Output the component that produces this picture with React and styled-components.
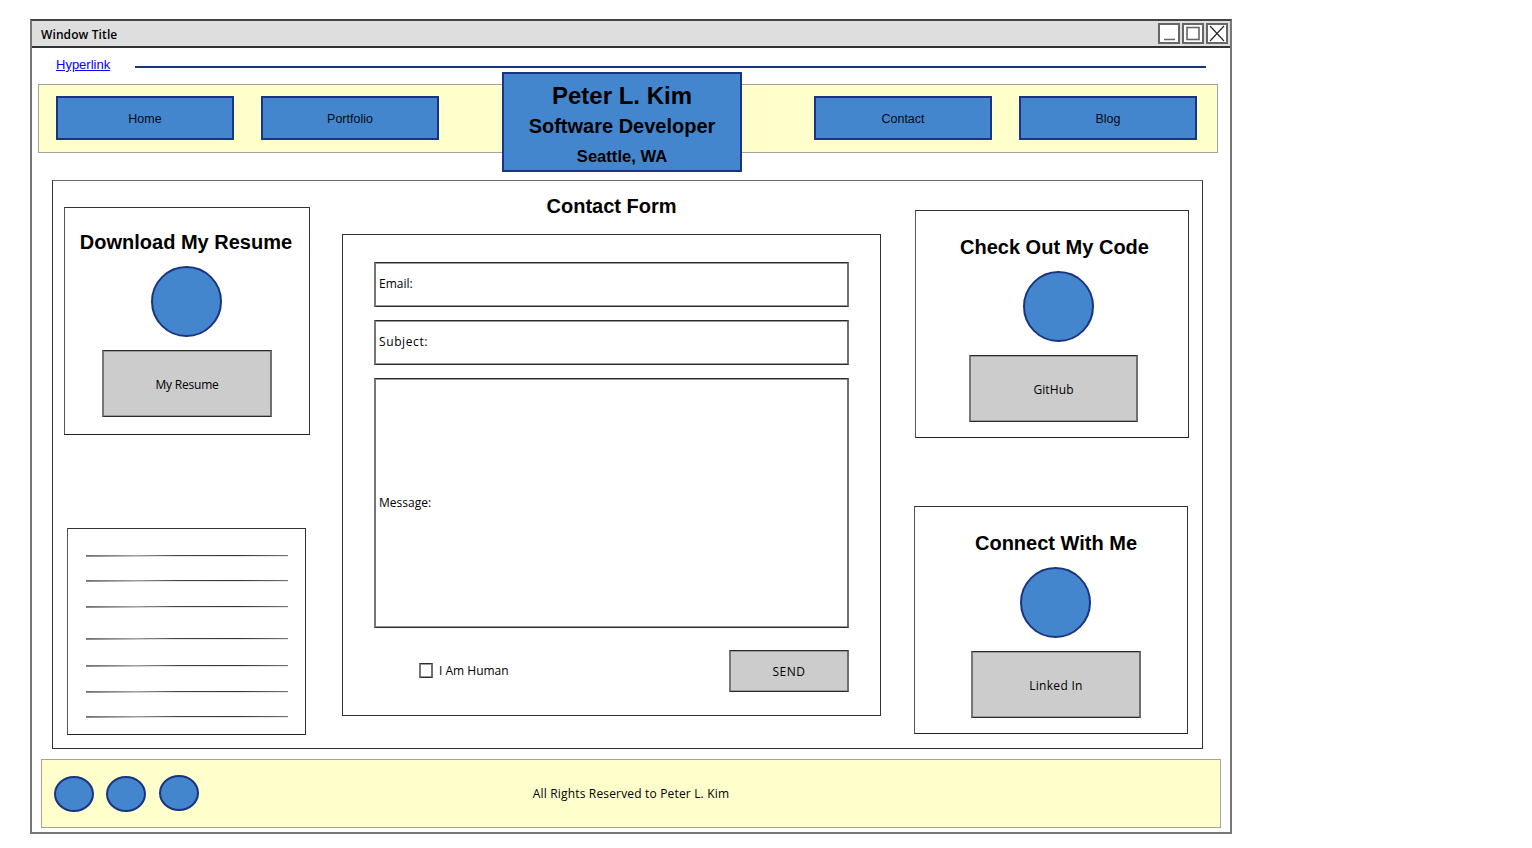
import React from "react";
import styled, { createGlobalStyle, css } from "styled-components";

const HAND = '"Open Sans", "DejaVu Sans", sans-serif';
const ARIAL = '"Liberation Sans", Arial, sans-serif';
const BLUE = "#4386ce";
const NAVY = "#1b3481";
const YELLOW = "#ffffcc";
const GREY = "#cccccc";

const sketchEdge = css`
  border-style: solid;
  border-width: 1px 2px;
  border-color: #2a2a2a #6f6f6f #2a2a2a #777;
  box-shadow: inset 0 1px 0 #9a9a9a, inset 0 -1px 0 #9a9a9a;
`;

const thinEdge = css`
  border: 1px solid;
  border-color: #333 #333 #222 #555;
`;

const Global = createGlobalStyle`
  *, *::before, *::after { box-sizing: border-box; }
  html, body { margin: 0; padding: 0; background: #fff; }
  body { font-family: ${ARIAL}; color: #000; }
  #root { padding: 19px 0 0 30px; }
`;

const Win = styled.div`
  width: 1202px;
  height: 815px;
  border: 2px solid #777;
  border-top-color: #444;
  background: #fff;
`;

const TitleBar = styled.div`
  height: 27px;
  background: #dedede;
  border-bottom: 2px solid #333;
  display: flex;
  align-items: center;
  justify-content: space-between;
  padding: 0 2px 0 9px;
`;

const TitleText = styled.span`
  font-family: ${HAND};
  font-size: 12px;
  font-weight: 600;
  letter-spacing: 0.1px;
  padding-top: 2px;
`;

const Controls = styled.div`
  display: flex;
  gap: 2px;
`;

const Control = styled.div`
  width: 22px;
  height: 21px;
  border: 2px solid #666;
  background: #fff;
  display: flex;
  align-items: center;
  justify-content: center;
`;

const TopRow = styled.div`
  height: 36px;
  display: flex;
  align-items: flex-start;
  padding-left: 24px;
`;

const LinkText = styled.a`
  font-family: ${ARIAL};
  font-size: 13px;
  line-height: 16px;
  margin-top: 9px;
  color: #0000ff;
  text-decoration: underline;
`;

const Rule = styled.div`
  width: 1071px;
  height: 2px;
  margin: 18px 0 0 25px;
  background: ${NAVY};
`;

const Band = styled.div`
  position: relative;
  margin-left: ${(p) => p.$left}px;
  margin-top: ${(p) => p.$top}px;
  width: 1180px;
  height: 69px;
  background: ${YELLOW};
  border: 1px solid #a3a3a3;
`;

const HeaderBand = styled(Band)`
  display: flex;
  align-items: center;
  justify-content: space-between;
  padding: 0 20px 1px 17px;
`;

const NavGroup = styled.div`
  display: flex;
  gap: 27px;
`;

const NavButton = styled.div`
  width: 178px;
  height: 44px;
  background: ${BLUE};
  border: 2px solid ${NAVY};
  display: flex;
  align-items: center;
  justify-content: center;
  font-size: 12.5px;
  color: #0a0a14;
  padding-top: 1px;
`;

const NameBox = styled.div`
  position: absolute;
  left: 463px;
  top: -13px;
  width: 240px;
  height: 100px;
  background: ${BLUE};
  border: 2px solid ${NAVY};
  display: flex;
  flex-direction: column;
  align-items: center;
  padding-top: 7px;
  font-weight: 700;
`;

const NameLine = styled.div`
  font-size: ${(p) => p.$size}px;
  line-height: ${(p) => p.$lh || 30}px;
  white-space: nowrap;
`;

const Main = styled.div`
  margin: 27px 0 0 20px;
  width: 1151px;
  height: 569px;
  border: 1px solid #333;
  border-top-color: #666;
  display: flex;
  align-items: flex-start;
`;

const LeftCol = styled.div`
  width: 257px;
  padding: 26px 0 0 11px;
`;

const CenterCol = styled.div`
  width: 539px;
  margin-left: 32px;
`;

const RightCol = styled.div`
  width: 275px;
  margin-left: 33px;
  padding-top: 29px;
`;

const Card = styled.div`
  ${thinEdge};
  width: ${(p) => p.$w}px;
  height: 228px;
  margin-left: ${(p) => p.$ml || 0}px;
  margin-top: ${(p) => p.$mt || 0}px;
  display: flex;
  flex-direction: column;
  align-items: center;
  padding-top: ${(p) => p.$pt}px;
  padding-left: ${(p) => p.$pl || 0}px;
`;

const Heading = styled.div`
  font-size: 20px;
  font-weight: 700;
  line-height: 24px;
  white-space: nowrap;
  margin-left: ${(p) => p.$ml || 0}px;
`;

const FormTitle = styled(Heading)`
  height: 53px;
  line-height: 50px;
  text-align: center;
`;

const Circle = styled.div`
  width: 71px;
  height: 71px;
  flex: none;
  margin: 12px 0 13px ${(p) => p.$ml || 0}px;
  border-radius: 50%;
  background: ${BLUE};
  border: 2px solid ${NAVY};
`;

const GreyButton = styled.div`
  ${sketchEdge};
  width: ${(p) => p.$w}px;
  height: ${(p) => p.$h}px;
  flex: none;
  background: ${GREY};
  display: flex;
  align-items: center;
  justify-content: center;
  font-family: ${HAND};
  font-size: 12px;
  letter-spacing: ${(p) => p.$track || 0}px;
  padding-top: ${(p) => p.$pt ?? 2}px;
`;

const ListBox = styled.div`
  ${thinEdge};
  width: 239px;
  height: 207px;
  margin: 93px 0 0 3px;
  padding: 26px 0 0 18px;
`;

const ListLine = styled.div`
  width: 202px;
  height: 2px;
  margin-top: ${(p) => p.$mt}px;
  background:
    linear-gradient(90deg, #6e6e6e 0, #a0a0a0 25%, #444 45%, #333 75%, #777 100%) top / 100% 1px no-repeat,
    linear-gradient(90deg, #8a8a8a 0, #e4e4e4 35%, #e8e8e8 100%) bottom / 100% 1px no-repeat;
`;

const FormBox = styled.div`
  width: 539px;
  height: 482px;
  border: 1px solid #333;
  padding: 27px 0 0 31px;
`;

const Field = styled.div`
  ${sketchEdge};
  width: 475px;
  height: ${(p) => p.$h}px;
  margin-bottom: 13px;
  display: flex;
  align-items: center;
  padding: 0 0 2px 3px;
  font-family: ${HAND};
  font-size: 12px;
  letter-spacing: ${(p) => p.$track || 0}px;
`;

const FormFooter = styled.div`
  width: 475px;
  margin-top: 22px;
  display: flex;
  align-items: center;
  justify-content: space-between;
  padding-left: 45px;
`;

const CheckRow = styled.label`
  display: flex;
  align-items: center;
  gap: 6px;
  font-family: ${HAND};
  font-size: 12px;
  padding-bottom: 2px;
`;

const CheckMark = styled.span`
  width: 14px;
  height: 15px;
  ${sketchEdge};
  background: #fff;
`;

const FooterBand = styled(Band)`
  display: grid;
  grid-template-columns: 1fr auto 1fr;
  align-items: center;
  padding: 0 12px;
`;

const Dots = styled.div`
  display: flex;
  gap: 12px;
  align-items: flex-start;
`;

const Dot = styled.div`
  width: 40px;
  height: 36px;
  border-radius: 50%;
  background: ${BLUE};
  border: 2px solid ${NAVY};
`;

const LastDot = styled(Dot)`
  margin: -1px 0 0 1px;
`;

const FooterText = styled.div`
  font-family: ${HAND};
  font-size: 12px;
  letter-spacing: 0.17px;
  white-space: nowrap;
`;

const lineGaps = [0, 23, 24, 30, 25, 24, 23];

export default function App() {
  return (
    <>
      <Global />
      <Win>
        <TitleBar>
          <TitleText>Window Title</TitleText>
          <Controls>
            <Control>
              <svg width="18" height="17" viewBox="0 0 18 17">
                <path d="M4 14.5h11" stroke="#666" strokeWidth="1.5" />
              </svg>
            </Control>
            <Control>
              <svg width="18" height="17" viewBox="0 0 18 17">
                <rect x="3" y="2.5" width="12" height="12" fill="none" stroke="#666" strokeWidth="1.6" />
              </svg>
            </Control>
            <Control>
              <svg width="18" height="17" viewBox="0 0 18 17">
                <path d="M2 1l14 15M16 1L2 16" stroke="#222" strokeWidth="1.1" />
              </svg>
            </Control>
          </Controls>
        </TitleBar>

        <TopRow>
          <LinkText href="#">Hyperlink</LinkText>
          <Rule />
        </TopRow>

        <HeaderBand $left={6} $top={0}>
          <NavGroup>
            <NavButton>Home</NavButton>
            <NavButton>Portfolio</NavButton>
          </NavGroup>
          <NavGroup>
            <NavButton>Contact</NavButton>
            <NavButton>Blog</NavButton>
          </NavGroup>
          <NameBox>
            <NameLine $size={24}>Peter L. Kim</NameLine>
            <NameLine $size={20}>Software Developer</NameLine>
            <NameLine $size={16.6} $lh={32}>Seattle, WA</NameLine>
          </NameBox>
        </HeaderBand>

        <Main>
          <LeftCol>
            <Card $w={246} $pt={22}>
              <Heading $ml={-2}>Download My Resume</Heading>
              <Circle $ml={-1} />
              <GreyButton $w={170} $h={67} $track={-0.2}>My Resume</GreyButton>
            </Card>
            <ListBox>
              {lineGaps.map((g, i) => (
                <ListLine key={i} $mt={g} />
              ))}
            </ListBox>
          </LeftCol>

          <CenterCol>
            <FormTitle>Contact Form</FormTitle>
            <FormBox>
              <Field $h={45}>Email:</Field>
              <Field $h={45} $track={0.6}>Subject:</Field>
              <Field $h={250}>Message:</Field>
              <FormFooter>
                <CheckRow>
                  <CheckMark />
                  I Am Human
                </CheckRow>
                <GreyButton $w={120} $h={42} $track={0.5} $pt={0}>SEND</GreyButton>
              </FormFooter>
            </FormBox>
          </CenterCol>

          <RightCol>
            <Card $w={274} $ml={1} $pt={24} $pl={3}>
              <Heading $ml={2}>Check Out My Code</Heading>
              <Circle $ml={10} />
              <GreyButton $w={169} $h={67} $track={0.1}>GitHub</GreyButton>
            </Card>
            <Card $w={274} $mt={68} $pt={24} $pl={10}>
              <Heading>Connect With Me</Heading>
              <Circle $ml={-1} />
              <GreyButton $w={170} $h={67} $track={0.3}>Linked In</GreyButton>
            </Card>
          </RightCol>
        </Main>

        <FooterBand $left={9} $top={10}>
          <Dots>
            <Dot />
            <Dot />
            <LastDot />
          </Dots>
          <FooterText>All Rights Reserved to Peter L. Kim</FooterText>
          <span />
        </FooterBand>
      </Win>
    </>
  );
}
